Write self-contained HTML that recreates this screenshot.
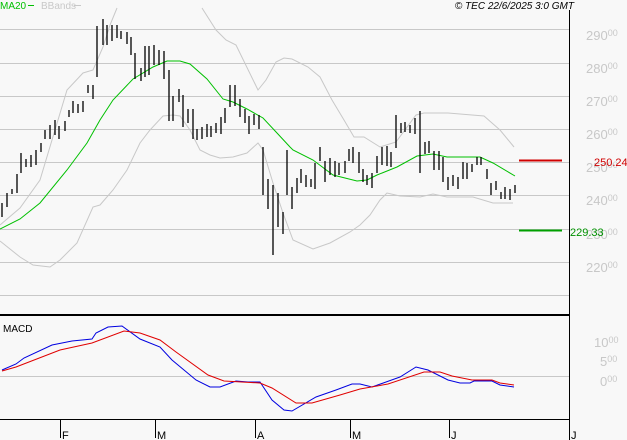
<!DOCTYPE html>
<html><head><meta charset="utf-8"><style>
html,body{margin:0;padding:0;background:#f8f8f8;}
svg{display:block;font-family:"Liberation Sans",sans-serif;}
</style></head><body>
<svg width="627" height="440" viewBox="0 0 627 440" xmlns="http://www.w3.org/2000/svg">
<rect width="627" height="440" fill="#f8f8f8"/>
<g stroke="#c8c8c8" stroke-width="1">
<line x1="0" y1="29.5" x2="569" y2="29.5"/><line x1="0" y1="63.5" x2="569" y2="63.5"/>
<line x1="0" y1="96.5" x2="569" y2="96.5"/><line x1="0" y1="129.5" x2="569" y2="129.5"/>
<line x1="0" y1="162.5" x2="569" y2="162.5"/><line x1="0" y1="195.5" x2="569" y2="195.5"/>
<line x1="0" y1="229.5" x2="569" y2="229.5"/><line x1="0" y1="262.5" x2="569" y2="262.5"/>
<line x1="0" y1="295.5" x2="569" y2="295.5"/><line x1="0" y1="376.5" x2="569" y2="376.5"/>
</g>
<g fill="#c8c8c8" font-size="13">
<text x="586" y="40">290<tspan font-size="9" dy="-4">00</tspan></text>
<text x="586" y="73">280<tspan font-size="9" dy="-4">00</tspan></text>
<text x="586" y="106">270<tspan font-size="9" dy="-4">00</tspan></text>
<text x="586" y="139">260<tspan font-size="9" dy="-4">00</tspan></text>
<text x="586" y="172">250<tspan font-size="9" dy="-4">00</tspan></text>
<text x="586" y="205">240<tspan font-size="9" dy="-4">00</tspan></text>
<text x="586" y="239">230<tspan font-size="9" dy="-4">00</tspan></text>
<text x="586" y="272">220<tspan font-size="9" dy="-4">00</tspan></text>
<text x="594" y="347">10<tspan font-size="9" dy="-4">00</tspan></text>
<text x="600" y="366">5<tspan font-size="9" dy="-4">00</tspan></text>
<text x="600" y="386">0<tspan font-size="9" dy="-4">00</tspan></text>
</g>
<!-- bands -->
<g fill="none" stroke="#c8c8c8" stroke-width="1">
<polyline points="0,225 20,208 40,180 67,90 83,73 93,70 103,47 110,25 117,8"/>
<polyline points="202,8 216,30 226,40 236,45 258,90 266,80 276,62 284,58 292,59 308,67 320,77 332,100 344,120 354,137 364,137 380,147 396,142 416,115 424,113 448,113 484,116 500,130 514,147"/>
<polyline points="0,241 20,257 33,265 50,267 60,260 77,243 93,207 100,205 113,190 127,170 140,143 150,130 163,116 173,115 180,116 190,130 200,150 210,155 220,158 233,157 247,153 258,143 263,150 273,183 283,213 293,240 313,249 330,243 350,232 360,225 370,215 380,200 387,193 400,196 420,197 433,194 447,197 473,197 493,203 513,203"/>
</g>
<polyline fill="none" stroke="#00c000" stroke-width="1" points="0,229 20,219 40,203 67,170 87,143 100,120 113,100 133,79 153,67 167,61 180,61 190,64 207,79 223,99 233,102 247,109 263,118 277,133 290,147 293,150 313,160 333,175 357,181 367,180 377,175 397,167 417,156 433,154 447,157 480,157 493,163 515,176"/>
<path fill="none" stroke="#000" stroke-width="1.3" d="M2 203V217M7 193V207M12 189V194M17 174V193M21 153V173M26 159V167M31 155V167M36 150V165M41 143V152M45 130V139M50 125V139M55 120V135M59 126V139M65 121V131M69 110V117M73 101V113M78 104V113M83 101V112M88 85V93M93 85V99M97 26V77M103 19V45M107 25V45M112 25V41M117 25V38M121 31V39M127 32V44M131 37V55M135 53V79M141 68V81M145 46V77M149 46V75M154 45V65M159 50V65M164 51V79M169 70V121M173 96V121M179 89V102M183 95V127M188 109V123M193 109V139M197 129V140M202 127V139M207 124V137M211 126V137M216 123V133M221 117V134M225 108V123M230 85V107M235 85V106M240 99V117M245 109V123M249 116V134M254 114V125M259 115V129M263 147V195M268 179V209M273 185V255M278 193V227M283 212V234M287 150V195M292 187V209M297 178V193M301 169V183M306 175V187M311 179V187M315 163V189M320 147V161M325 161V182M330 158V175M335 161V177M339 163V175M345 161V173M349 149V161M353 147V163M359 152V173M363 169V182M367 175V185M372 173V188M377 156V173M382 147V165M387 146V166M391 152V167M396 115V148M401 123V133M405 122V132M410 125V133M415 118V134M420 111V173M425 142V154M429 141V153M434 151V170M439 151V170M443 157V182M448 177V190M453 175V186M458 177V189M463 162V179M467 163V179M472 164V172M477 157V165M481 157V165M487 169V179M491 183V195M496 181V190M501 192V199M505 187V199M510 189V200M515 185V193"/>
<line x1="519" y1="160.5" x2="562" y2="160.5" stroke="#d00000" stroke-width="2"/>
<line x1="519" y1="230.5" x2="562" y2="230.5" stroke="#00a000" stroke-width="2"/>
<text x="594" y="166" fill="#d00000" font-size="11">250.24</text>
<text x="570" y="236" fill="#009000" font-size="11">229.33</text>
<line x1="569.5" y1="10" x2="569.5" y2="440" stroke="#000" stroke-width="1"/>
<line x1="0" y1="315" x2="570" y2="315" stroke="#000" stroke-width="2"/>
<line x1="0" y1="419.5" x2="570" y2="419.5" stroke="#000" stroke-width="1"/>
<polyline fill="none" stroke="#0000e0" stroke-width="1" points="2,370 16,364 24,358 52,345 72,341 92,339 96,333 108,327 122,326 140,339 160,347 172,360 196,380 210,387 220,387 236,381 248,382 260,382 272,400 284,410 292,411 316,397 336,390 352,384 360,384 372,387 400,377 416,367 428,370 448,380 460,383 470,383 474,381 492,381 500,385 514,387"/>
<polyline fill="none" stroke="#e00000" stroke-width="1" points="2,371 16,367 60,350 92,343 124,331 140,333 160,340 176,352 208,375 224,381 260,383 272,388 296,403 312,403 340,395 360,389 388,384 424,372 440,372 452,376 472,380 492,380 500,383 514,385"/>
<text x="3" y="332" font-size="10" fill="#000">MACD</text>
<g stroke="#000" stroke-width="1">
<line x1="60.5" y1="420" x2="60.5" y2="438"/><line x1="155.5" y1="420" x2="155.5" y2="438"/>
<line x1="255.5" y1="420" x2="255.5" y2="438"/><line x1="350.5" y1="420" x2="350.5" y2="438"/>
<line x1="449.5" y1="420" x2="449.5" y2="438"/><line x1="569.5" y1="420" x2="569.5" y2="438"/>
</g>
<g font-size="11" fill="#000">
<text x="62" y="439">F</text><text x="157" y="439">M</text><text x="257" y="439">A</text>
<text x="352" y="439">M</text><text x="451" y="439">J</text><text x="571" y="439">J</text>
</g>
<text x="0" y="9" font-size="10" fill="#00c000">MA20</text>
<line x1="28" y1="5.5" x2="34" y2="5.5" stroke="#00c000"/>
<text x="41" y="9" font-size="10" fill="#c8c8c8">BBands</text>
<line x1="74" y1="5.5" x2="81" y2="5.5" stroke="#c8c8c8"/>
<text x="574" y="9" font-size="10" font-style="italic" fill="#000" text-anchor="end">© TEC 22/6/2025 3:0 GMT</text>
</svg>
</body></html>
